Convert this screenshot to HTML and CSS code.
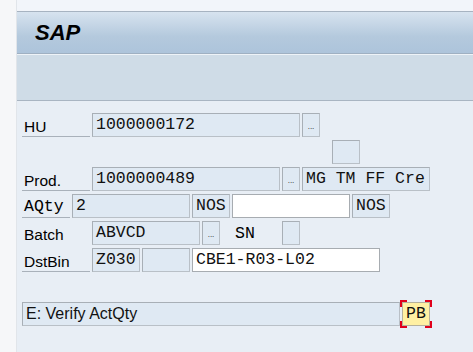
FILE: index.html
```
<!DOCTYPE html>
<html lang="en">
<head>
    <meta charset="UTF-8">
    <meta name="viewport" content="width=device-width, initial-scale=1.0">
    <title>SAP</title>
    <link rel="stylesheet" href="styles.css">
</head>
<body>
    <div class="side"></div>
    <div class="main">
        <div class="topstrip"></div>
        <div class="titlebar">SAP</div>
        <div class="toolbar"></div>
        <div class="form">
            <!-- row 1 -->
            <div class="label r1 x1 w7">HU</div>
            <div class="field r1 x8 w21">1000000172</div>
            <div class="field btn r1 x29 w2">...</div>
            <!-- row 2 -->
            <div class="field r2 x32 w3"></div>
            <!-- row 3 -->
            <div class="label r3 x1 w7">Prod.</div>
            <div class="field r3 x8 w19">1000000489</div>
            <div class="field btn r3 x27 w2">...</div>
            <div class="field r3 x29 w13">MG TM FF Cre</div>
            <!-- row 4 -->
            <div class="label mono r4 x1 w5">AQty</div>
            <div class="field r4 x6 w12">2</div>
            <div class="field r4 x18 w4">NOS</div>
            <div class="field input r4 x22 w12"></div>
            <div class="field r4 x34 w4">NOS</div>
            <!-- row 5 -->
            <div class="label plain r5 x1 w7">Batch</div>
            <div class="field r5 x8 w11">ABVCD</div>
            <div class="field btn r5 x19 w2">...</div>
            <div class="label plain mono r5 x22 w5">SN</div>
            <div class="field r5 x27 w2"></div>
            <!-- row 6 -->
            <div class="label r6 x1 w7">DstBin</div>
            <div class="field r6 x8 w5">Z030</div>
            <div class="field r6 x13 w5"></div>
            <div class="field input r6 x18 w19">CBE1-R03-L02</div>
            <!-- row 8 -->
            <div class="field msg r8 x1 w38">E: Verify ActQty</div>
            <div class="field pb r8 x39 w3">PB</div>
        </div>
    </div>
</body>
</html>
```
FILE: styles.css
```
html, body {
    margin: 0;
    height: 100%;
}
body {
    display: flex;
    background: #e8eef5;
    font-family: "Liberation Sans", Arial, sans-serif;
    overflow: hidden;
}
.side {
    width: 16px;
    background: #f6f7f9;
    border-right: 1px solid #e1e5ea;
}
.main {
    flex: 1;
    background: #e8eef5;
}
.topstrip {
    height: 11px;
    background: #f2f5fa;
    border-bottom: 1px solid #a7b3c1;
}
.titlebar {
    height: 41px;
    line-height: 41px;
    padding-left: 18px;
    background: linear-gradient(#d7e3ef, #b4c9dd 60%, #adc4db);
    border-bottom: 1px solid #9fb0c2;
    font-size: 22px;
    font-weight: bold;
    font-style: italic;
    color: #000;
}
.toolbar {
    height: 45px;
    background: #cfdce7;
    border-top: 1px solid #eef3f8;
    border-bottom: 1px solid #a9b5c2;
}
.form {
    display: grid;
    grid-template-columns: repeat(41, 8px);
    grid-template-rows: repeat(8, 24px);
    column-gap: 2px;
    row-gap: 3px;
    padding: 12px 0 0 5px;
}

/* grid placement */
.r1 { grid-row: 1; }
.r2 { grid-row: 2; }
.r3 { grid-row: 3; }
.r4 { grid-row: 4; }
.r5 { grid-row: 5; }
.r6 { grid-row: 6; }
.r8 { grid-row: 8; }
.x1 { grid-column-start: 1; }
.x6 { grid-column-start: 6; }
.x8 { grid-column-start: 8; }
.x13 { grid-column-start: 13; }
.x18 { grid-column-start: 18; }
.x19 { grid-column-start: 19; }
.x22 { grid-column-start: 22; }
.x27 { grid-column-start: 27; }
.x29 { grid-column-start: 29; }
.x32 { grid-column-start: 32; }
.x34 { grid-column-start: 34; }
.x39 { grid-column-start: 39; }
.w2 { grid-column-end: span 2; }
.w3 { grid-column-end: span 3; }
.w4 { grid-column-end: span 4; }
.w5 { grid-column-end: span 5; }
.w7 { grid-column-end: span 7; }
.w11 { grid-column-end: span 11; }
.w12 { grid-column-end: span 12; }
.w13 { grid-column-end: span 13; }
.w19 { grid-column-end: span 19; }
.w21 { grid-column-end: span 21; }
.w38 { grid-column-end: span 38; }

.label {
    box-sizing: border-box;
    height: 24px;
    padding: 4px 0 0 2px;
    line-height: 20px;
    font-size: 15.5px;
    color: #000;
    border-bottom: 1px solid #a9b1ba;
    white-space: nowrap;
}
.label.plain {
    border-bottom: none;
}
.label.mono,
.field {
    font-family: "Liberation Mono", "Courier New", monospace;
    font-size: 16.5px;
}
.label.mono {
    padding-top: 3px;
}
.label.plain.mono {
    padding-left: 3px;
}
.field {
    box-sizing: border-box;
    height: 24px;
    line-height: 22px;
    padding-left: 3px;
    background: #dfe9f3;
    border: 1px solid #a8afb6;
    border-right-color: #b9c0c7;
    border-bottom-color: #b9c0c7;
    color: #111;
    white-space: nowrap;
    overflow: hidden;
}
.field.input {
    background: #fff;
    border-color: #a7acb1;
}
.field.btn {
    padding: 0;
    text-align: center;
    font-family: "Liberation Sans", Arial, sans-serif;
    font-size: 8px;
    line-height: 26px;
}
.field.msg {
    font-family: "Liberation Sans", Arial, sans-serif;
    font-size: 16px;
}
.field.pb {
    position: relative;
    overflow: visible;
    padding: 0;
    text-align: center;
    background: #fff0a3;
    border-color: #b5b19c;
}
.field.pb::after {
    content: "";
    position: absolute;
    top: -3px;
    left: -3px;
    right: -3px;
    bottom: -3px;
    background:
        linear-gradient(#e0001b, #e0001b) left top / 7px 2px no-repeat,
        linear-gradient(#e0001b, #e0001b) left top / 2px 7px no-repeat,
        linear-gradient(#e0001b, #e0001b) right top / 7px 2px no-repeat,
        linear-gradient(#e0001b, #e0001b) right top / 2px 7px no-repeat,
        linear-gradient(#e0001b, #e0001b) left bottom / 7px 2px no-repeat,
        linear-gradient(#e0001b, #e0001b) left bottom / 2px 7px no-repeat,
        linear-gradient(#e0001b, #e0001b) right bottom / 7px 2px no-repeat,
        linear-gradient(#e0001b, #e0001b) right bottom / 2px 7px no-repeat;
}
```
